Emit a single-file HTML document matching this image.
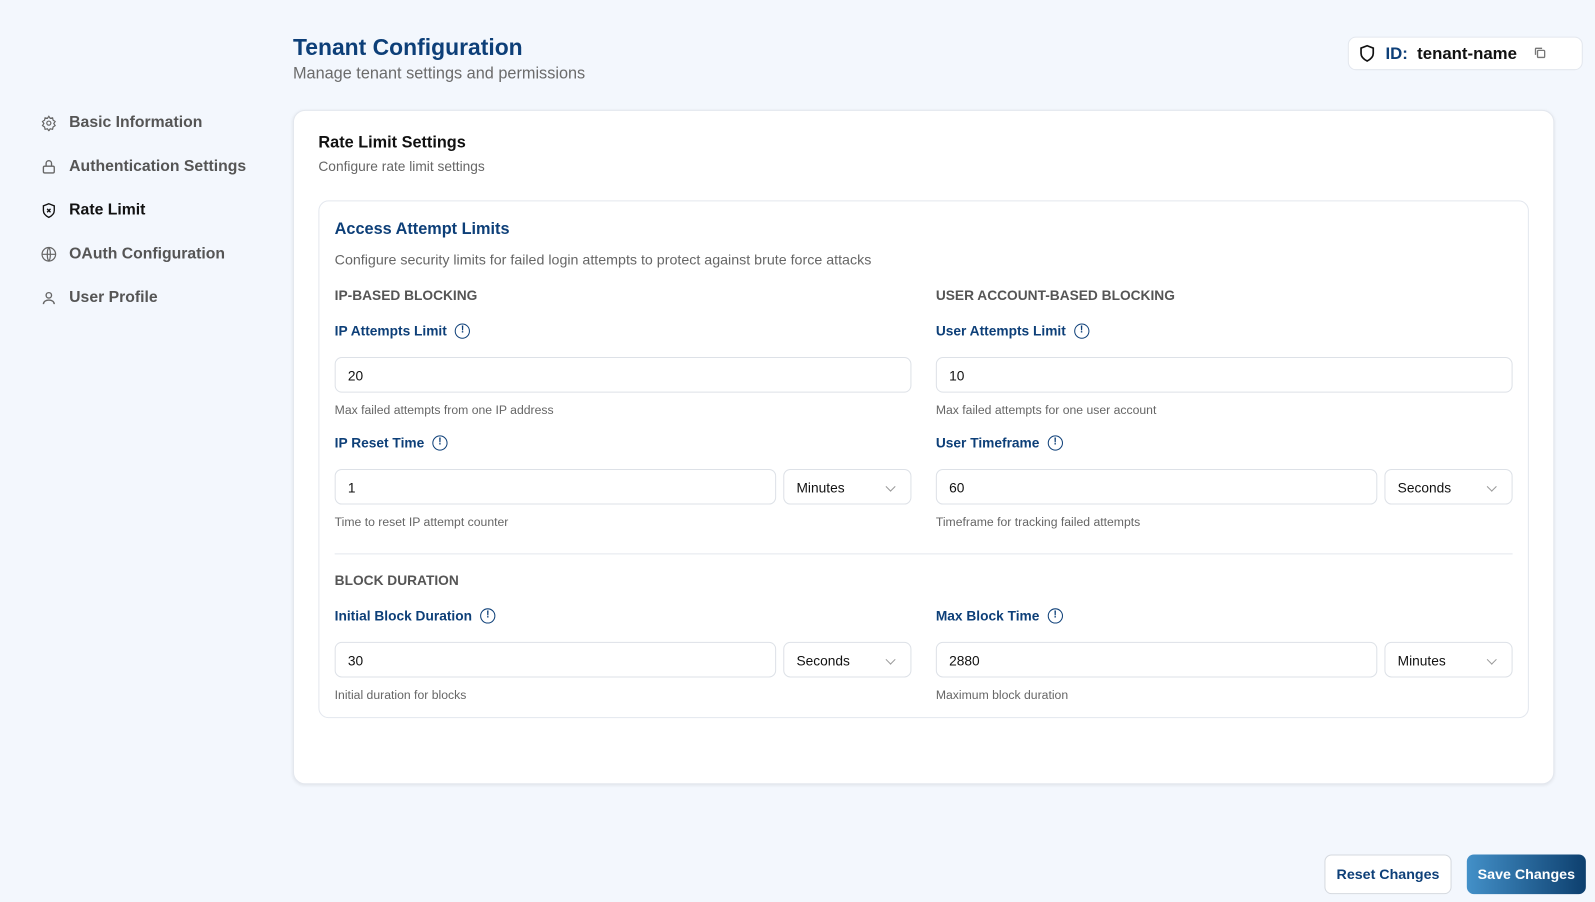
<!DOCTYPE html>
<html><head><meta charset="utf-8"><style>
*{box-sizing:border-box;margin:0;padding:0}
body{width:1595px;height:902px;background:#f3f7fd;font-family:"Liberation Sans",sans-serif;position:relative;overflow:hidden;color:#111}
#w{position:absolute;left:0;top:0;width:1568px;height:887px;transform:scale(1.01722);transform-origin:0 0}
.a{position:absolute;white-space:nowrap}
.nav{left:40px;font-size:15.5px;color:#555;font-weight:bold;display:flex;align-items:center;gap:12px}
.nav svg{width:16px;height:16px}
.card{position:absolute;left:288px;top:108px;width:1240px;height:663px;background:#fff;border:1px solid #e3e7ee;border-radius:12px;box-shadow:0 1px 3px rgba(0,0,0,.08)}
.inner{position:absolute;left:313px;top:197px;width:1190px;height:509px;border:1px solid #e3e7ee;border-radius:10px}
.sec{font-size:13.5px;color:#555;font-weight:bold;letter-spacing:0}
.lbl{font-size:13.5px;color:#0d3f78;font-weight:bold;display:flex;align-items:center;gap:8px}
.ic{width:15px;height:15px;border:1.5px solid #0d3f78;border-radius:50%;font-size:10px;line-height:12px;text-align:center;font-weight:bold}
.inp{position:absolute;height:35px;border:1px solid #dde1e7;border-radius:7px;font-size:13.5px;padding:0 12px;line-height:35px;color:#111;background:#fff}
.sel::after{content:"";position:absolute;right:16px;top:13px;width:6px;height:6px;border-right:1px solid #999;border-bottom:1px solid #999;transform:rotate(45deg)}
.hint{font-size:12px;color:#666}
</style></head><body><div id="w">
<div class="a" style="left:288px;top:34px;font-size:22.5px;font-weight:bold;color:#0d3f78">Tenant Configuration</div>
<div class="a" style="left:288px;top:64px;font-size:16px;color:#6b6b6b">Manage tenant settings and permissions</div>

<div class="a nav" style="top:112px"><svg viewBox="0 0 24 24" fill="none" stroke="#666" stroke-width="1.8"><circle cx="12" cy="12" r="3"/><path d="M12 2l2 3 3.5-.8.8 3.5 3 2-2 3 2 3-3 2-.8 3.5-3.5-.8-2 3-2-3-3.5.8-.8-3.5-3-2 2-3-2-3 3-2 .8-3.5 3.5.8z"/></svg>Basic Information</div>
<div class="a nav" style="top:155px"><svg viewBox="0 0 24 24" fill="none" stroke="#666" stroke-width="2"><rect x="4" y="11" width="16" height="10" rx="2"/><path d="M8 11V7a4 4 0 018 0v4"/></svg>Authentication Settings</div>
<div class="a nav" style="top:198px;color:#111"><svg viewBox="0 0 24 24" fill="none" stroke="#111" stroke-width="2"><path d="M12 2l8 3v7c0 5-4 8-8 10-4-2-8-5-8-10V5z"/><path d="M9.5 9.5l5 5M14.5 9.5l-5 5"/></svg>Rate Limit</div>
<div class="a nav" style="top:241px"><svg viewBox="0 0 24 24" fill="none" stroke="#666" stroke-width="1.8"><circle cx="12" cy="12" r="10"/><path d="M2 12h20M12 2c3 3 3 17 0 20M12 2c-3 3-3 17 0 20"/></svg>OAuth Configuration</div>
<div class="a nav" style="top:284px"><svg viewBox="0 0 24 24" fill="none" stroke="#666" stroke-width="2"><circle cx="12" cy="8" r="4"/><path d="M4 21c0-4 4-6 8-6s8 2 8 6"/></svg>User Profile</div>

<div class="a" style="left:1325px;top:36px;width:231px;height:33px;background:#fff;border:1px solid #e3e7ee;border-radius:8px"></div>
<svg class="a" style="left:1335px;top:43px" width="18" height="19" viewBox="0 0 24 24" fill="none" stroke="#111" stroke-width="2.2"><path d="M12 2l8 3v7c0 5-4 8-8 10-4-2-8-5-8-10V5z"/></svg>
<div class="a" style="left:1362px;top:44px;font-size:16.5px;font-weight:bold"><span style="color:#0d3f78">ID:</span>&nbsp; tenant-name</div>
<svg class="a" style="left:1508px;top:46px" width="12" height="12" viewBox="0 0 12 12" fill="none" stroke="#777" stroke-width="1.3"><rect x="3.5" y="3.5" width="7" height="7" rx="1"/><path d="M1.5 8V2a.5.5 0 01.5-.5h6"/></svg>

<div class="card"></div>
<div class="a" style="left:313px;top:132px;font-size:16px;font-weight:bold">Rate Limit Settings</div>
<div class="a" style="left:313px;top:156px;font-size:13.5px;color:#666">Configure rate limit settings</div>
<div class="inner"></div>
<div class="a" style="left:329px;top:217px;font-size:16px;font-weight:bold;color:#0d3f78">Access Attempt Limits</div>
<div class="a" style="left:329px;top:247px;font-size:14px;color:#666">Configure security limits for failed login attempts to protect against brute force attacks</div>
<div class="a sec" style="left:329px;top:283px">IP-BASED BLOCKING</div>
<div class="a sec" style="left:920px;top:283px">USER ACCOUNT-BASED BLOCKING</div>

<div class="a lbl" style="left:329px;top:318px">IP Attempts Limit <div class="ic">!</div></div>
<div class="inp" style="left:329px;top:351px;width:567px">20</div>
<div class="a hint" style="left:329px;top:396px">Max failed attempts from one IP address</div>
<div class="a lbl" style="left:329px;top:428px">IP Reset Time <div class="ic">!</div></div>
<div class="inp" style="left:329px;top:461px;width:434px">1</div>
<div class="inp sel" style="left:770px;top:461px;width:126px">Minutes</div>
<div class="a hint" style="left:329px;top:506px">Time to reset IP attempt counter</div>

<div class="a lbl" style="left:920px;top:318px">User Attempts Limit <div class="ic">!</div></div>
<div class="inp" style="left:920px;top:351px;width:567px">10</div>
<div class="a hint" style="left:920px;top:396px">Max failed attempts for one user account</div>
<div class="a lbl" style="left:920px;top:428px">User Timeframe <div class="ic">!</div></div>
<div class="inp" style="left:920px;top:461px;width:434px">60</div>
<div class="inp sel" style="left:1361px;top:461px;width:126px">Seconds</div>
<div class="a hint" style="left:920px;top:506px">Timeframe for tracking failed attempts</div>

<div class="a" style="left:329px;top:544px;width:1158px;height:1px;background:#e3e7ee"></div>
<div class="a sec" style="left:329px;top:563px">BLOCK DURATION</div>
<div class="a lbl" style="left:329px;top:598px">Initial Block Duration <div class="ic">!</div></div>
<div class="inp" style="left:329px;top:631px;width:434px">30</div>
<div class="inp sel" style="left:770px;top:631px;width:126px">Seconds</div>
<div class="a hint" style="left:329px;top:676px">Initial duration for blocks</div>
<div class="a lbl" style="left:920px;top:598px">Max Block Time <div class="ic">!</div></div>
<div class="inp" style="left:920px;top:631px;width:434px">2880</div>
<div class="inp sel" style="left:1361px;top:631px;width:126px">Minutes</div>
<div class="a hint" style="left:920px;top:676px">Maximum block duration</div>

<div class="a" style="left:1302px;top:840px;width:125px;height:39px;border:1px solid #d5d9df;border-radius:7px;background:#fff;font-size:14px;font-weight:bold;color:#0d3f78;text-align:center;line-height:37px">Reset Changes</div>
<div class="a" style="left:1442px;top:840px;width:117px;height:39px;border-radius:7px;background:linear-gradient(90deg,#4390c8,#0d3f6e);font-size:14px;font-weight:bold;color:#fff;text-align:center;line-height:39px">Save Changes</div>
</div></body></html>
